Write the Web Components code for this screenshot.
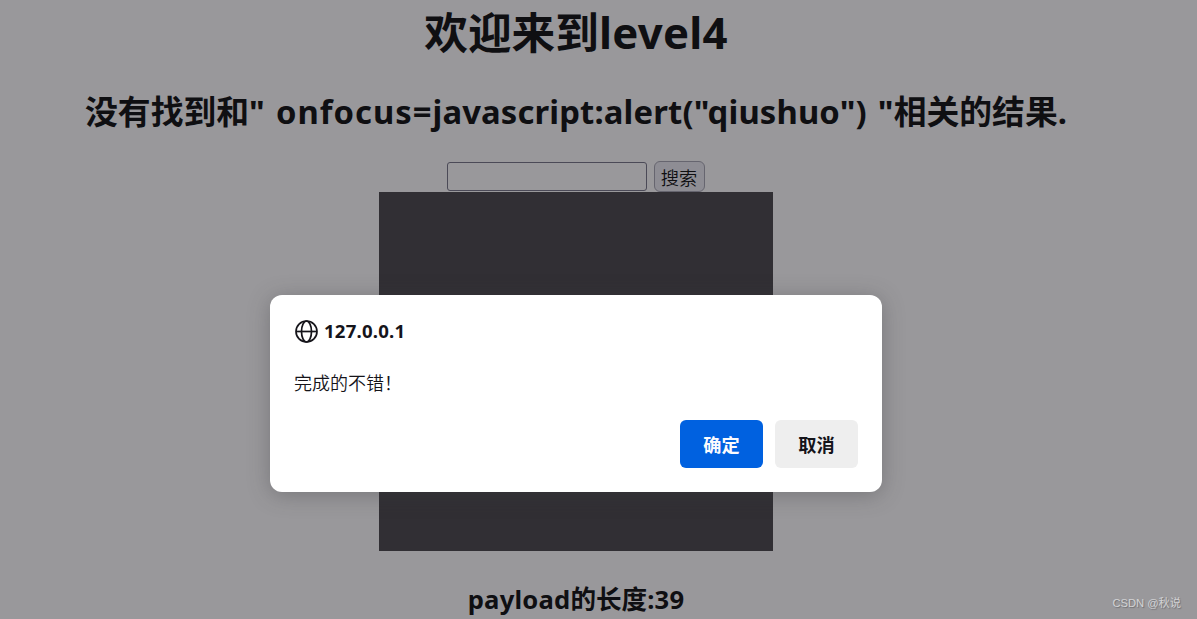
<!DOCTYPE html>
<html lang="zh-CN">
<head>
<meta charset="utf-8">
<title>欢迎来到level4</title>
<style>
  body {
    margin: 0;
    width: 1197px;
    height: 619px;
    overflow: hidden;
    position: relative;
    background: #99989b;
    color: #0f0f12;
    font-family: "Noto Sans", "Noto Sans CJK SC", sans-serif;
  }

  .wide {
    letter-spacing: 1px;
  }
</style>
</head>
<body>
<level-page>
  <level-heading slot="title" size="1"><span>欢迎来到</span><span class="latin">level4</span></level-heading>
  <level-heading slot="result" size="2"><span>没有找到和</span><span class="latin">" <span class="wide">onfocus=</span>javascript:alert("qiushuo") "</span><span>相关的结果.</span></level-heading>
  <search-form slot="form">搜索</search-form>
  <level-heading slot="payload" size="3"><span class="latin">payload</span><span>的长度</span><span class="latin">:39</span></level-heading>
</level-page>
<alert-dialog>
  <span slot="host">127.0.0.1</span>
  <span slot="message">完成的不错！</span>
  <dialog-button slot="actions" primary>确定</dialog-button>
  <dialog-button slot="actions">取消</dialog-button>
</alert-dialog>
<water-mark>CSDN @秋说</water-mark>

<script>
const createTemplate = (html) => {
  const template = document.createElement('template')
  template.innerHTML = html
  return template
}

/**
 * Base for the elements, clones the template into an open shadow root.
 */
class BaseElement extends HTMLElement {
  constructor () {
    super()
    this.attachShadow({ mode: 'open' })
      .appendChild(this.constructor.template.content.cloneNode(true))
  }
}

customElements.define('level-page',
  class extends BaseElement {
    static template = createTemplate(`
      <style>
        :host {
          display: flex;
          flex-direction: column;
          align-items: center;
          width: 1152px;
          padding-top: 3px;
          box-sizing: border-box;
        }

        ::slotted([slot="result"]) {
          margin-top: 26px;
        }

        ::slotted([slot="form"]) {
          margin-top: 24px;
        }

        ::slotted([slot="payload"]) {
          margin-top: 31px;
        }

        .picture {
          width: 394px;
          height: 359px;
          background: #312f34;
        }
      </style>
      <slot name="title"></slot>
      <slot name="result"></slot>
      <slot name="form"></slot>
      <div class="picture"></div>
      <slot name="payload"></slot>
    `)
  })

customElements.define('level-heading',
  class extends BaseElement {
    static template = createTemplate(`
      <style>
        :host {
          display: block;
          font-weight: 700;
          white-space: nowrap;
        }

        :host([size="1"]) {
          font-size: 43.7px;
          line-height: 58px;
          --latin-spacing: 0.25px;
        }

        :host([size="2"]) {
          font-size: 32.8px;
          line-height: 50px;
          --latin-spacing: 0.14px;
          --latin-word-spacing: 2.4px;
        }

        :host([size="3"]) {
          font-size: 25.6px;
          line-height: 36px;
          --latin-spacing: 0.2px;
        }

        ::slotted(.latin) {
          letter-spacing: var(--latin-spacing);
          word-spacing: var(--latin-word-spacing, 0);
        }
      </style>
      <slot></slot>
    `)
  })

customElements.define('search-form',
  class extends BaseElement {
    static template = createTemplate(`
      <style>
        :host {
          display: flex;
          align-items: center;
          gap: 7px;
          height: 31px;
        }

        input {
          width: 200px;
          height: 29px;
          box-sizing: border-box;
          border: 1px solid #4b4a57;
          border-radius: 3px;
          background: #99989b;
          padding: 0;
          outline: none;
        }

        button {
          width: 51px;
          height: 31px;
          box-sizing: border-box;
          border: 1px solid #66656f;
          border-radius: 6px;
          background: #8e8d94;
          color: inherit;
          font: 350 18.2px/28px "Noto Sans CJK SC", sans-serif;
          padding: 0 1px 0 0;
        }
      </style>
      <input type="text">
      <button type="button"><slot></slot></button>
    `)
  })

customElements.define('alert-dialog',
  class extends BaseElement {
    static template = createTemplate(`
      <style>
        :host {
          position: absolute;
          left: 270px;
          top: 295px;
          display: flex;
          flex-direction: column;
          width: 612px;
          height: 197px;
          box-sizing: border-box;
          padding: 24px;
          border-radius: 12px;
          background: #fff;
          color: #15141a;
          box-shadow: 0 3px 21px rgba(58, 58, 60, 0.35);
          font-family: "Noto Sans", "Noto Sans CJK SC", sans-serif;
        }

        header {
          display: flex;
          align-items: center;
          gap: 6px;
          height: 25px;
          padding-left: 1px;
          font-size: 18.6px;
          font-weight: 700;
          line-height: 25px;
        }

        ::slotted([slot="host"]) {
          padding-bottom: 2px;
          letter-spacing: 0.2px;
        }

        svg {
          display: block;
        }

        p {
          margin: 25px 0 0;
          font-size: 18px;
          font-weight: 350;
          line-height: 28px;
        }

        footer {
          display: flex;
          justify-content: flex-end;
          gap: 12px;
          margin-top: auto;
        }
      </style>
      <header>
        <svg width="23" height="23" viewBox="0 0 23 23" fill="none" stroke="#15141a" stroke-width="1.7">
          <circle cx="11.5" cy="11.5" r="10.5"/>
          <ellipse cx="11.5" cy="11.5" rx="5" ry="10.5"/>
          <path d="M1 11.5h21"/>
        </svg>
        <slot name="host"></slot>
      </header>
      <p><slot name="message"></slot></p>
      <footer><slot name="actions"></slot></footer>
    `)
  })

customElements.define('dialog-button',
  class extends BaseElement {
    static template = createTemplate(`
      <style>
        :host {
          display: flex;
          align-items: center;
          justify-content: center;
          width: 83px;
          height: 48px;
          border-radius: 6px;
          background: #eee;
          color: #15141a;
          font: 700 18.2px/28px "Noto Sans CJK SC", sans-serif;
        }

        :host([primary]) {
          background: #0061e0;
          color: #fbfbfe;
        }
      </style>
      <slot></slot>
    `)
  })

customElements.define('water-mark',
  class extends BaseElement {
    static template = createTemplate(`
      <style>
        :host {
          position: absolute;
          right: 16px;
          bottom: 7px;
          color: #d3d3d5;
          font: 11.2px/18px "Liberation Sans", "Noto Sans CJK SC", sans-serif;
          text-shadow: 1px 1px 1px #707073;
          white-space: nowrap;
        }
      </style>
      <slot></slot>
    `)
  })
</script>
</body>
</html>
